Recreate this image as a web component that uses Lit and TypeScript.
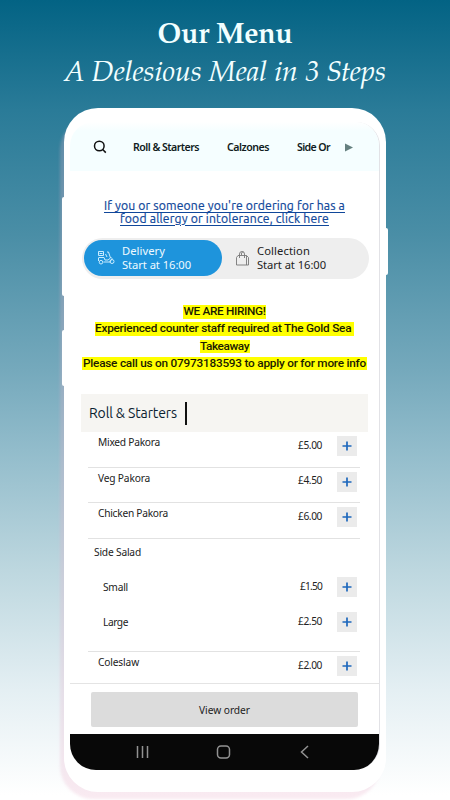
import { LitElement, html, css } from "lit";
import { customElement, property } from "lit/decorators.js";

/** Text whose tracking is adjusted so that the line takes the given width. */
@customElement("fit-text")
class FitText extends LitElement {
  @property({ type: Number }) w = 0;
  @property() text = "";
  static styles = css`
    :host { display: inline-block; white-space: nowrap; }
    .t { display: inline-block; white-space: pre; text-decoration: inherit; text-decoration-thickness: 1px; text-underline-offset: 1.5px; text-decoration-skip-ink: auto; }
  `;
  render() { return html`<span class="t">${this.text}</span>`; }
  updated() {
    const t = this.renderRoot.querySelector(".t") as HTMLElement;
    t.style.letterSpacing = "0px";
    const natural = t.getBoundingClientRect().width;
    const gap = (this.w - natural) / this.text.length;
    t.style.letterSpacing = gap.toFixed(3) + "px";
  }
}

const fit = (text: string, w: number) => html`<fit-text .text=${text} .w=${w}></fit-text>`;

@customElement("app-root")
class AppRoot extends LitElement {
  static styles = css`
    * { box-sizing: border-box; }
    :host {
      display: flex; flex-direction: column; align-items: center; position: relative;
      width: 450px; height: 800px; overflow: hidden;
      background: linear-gradient(#036384 0, #2a7b98 110px, #4a8ea6 235px, #75a9bc 370px, #92bccb 450px, #bdd7df 570px, #e4eff3 690px, #fff 795px);
      font-family: "Noto Sans", sans-serif; color: #222;
    }
    .title, .sub { font-family: "Palatino Linotype", Palatino, P052, "TeX Gyre Pagella", "URW Palladio L", "Liberation Serif", serif; color: #f2ffff; height: 38px; line-height: 38px; }
    .title { font-size: 28.5px; font-weight: 700; margin-top: 17px; }
    .sub { font-size: 28.5px; font-style: italic; padding-top: 1px; }
    .phone {
      position: relative; width: 322px; height: 684px; margin-top: 15px; padding: 14px 6px 0; background: #fff;
      border-radius: 34px; box-shadow: -5px 8px 3px -1px rgba(232, 180, 205, .28);
    }
    .bump { position: absolute; background: #fff; width: 4px; }
    .l1 { left: -2px; top: 89px; height: 99px; border-radius: 2px 0 0 2px; }
    .l2 { left: -2px; top: 222px; height: 56px; border-radius: 2px 0 0 2px; }
    .r1 { right: -2px; top: 120px; height: 47px; border-radius: 0 2px 2px 0; }
    .screen { width: 310px; height: 648px; border-radius: 24px 24px 26px 26px; overflow: hidden; border-right: 1px solid #e2e2e6; display: flex; flex-direction: column; }
    .tabs { height: 49px; flex: none; background: linear-gradient(#fff, #f5feff 9px); display: flex; align-items: center; padding: 1px 0 0 23px; font-size: 10.6px; font-weight: 600; color: #111c22; }
    .tabs svg { flex: none; }
    .tabs .a { margin-left: 26px; }
    .tabs .b { margin-left: 28px; }
    .tabs .c { margin-left: 28px; }
    .tabs .play { margin-left: 15px; }
    .link { margin-top: 29px; height: 25px; color: #10479a; font: 12.2px/12.5px Ubuntu, "Noto Sans", sans-serif; display: flex; flex-direction: column; align-items: center; text-decoration: underline; -webkit-text-stroke: .2px #10479a; }
    .link fit-text { height: 12.5px; text-decoration: underline; }
    .switch { margin: 13px 0 0 12px; width: 287px; height: 41px; flex: none; border-radius: 21px; background: #eee; display: flex; padding: 2px; }
    .opt { width: 138px; height: 36px; border-radius: 18px; display: flex; align-items: center; padding: 0 0 0 13px; font-size: 11.2px; line-height: 14px; }
    .opt.on { background: #1e94dc; color: #effaff; }
    .opt svg { margin-right: 7px; flex: none; }
    .opt fit-text { display: block; height: 14px; }
    .opt.off { padding-left: 13px; }
    .hire { margin-top: 24px; height: 70px; font: 500 11.8px/17.3px Roboto, sans-serif; color: #1b1b00; display: flex; flex-direction: column; align-items: center; }
    .hire span { background: #ff0; height: 13.5px; line-height: 13.5px; margin: 2px 0 1.8px; padding: 0 .5px; }
    .cat { margin: 21px 0 0 11px; width: 287px; height: 38px; flex: none; background: #f6f5f2; display: flex; align-items: center; padding-left: 8px; font: 14px/20px Ubuntu, "Noto Sans", sans-serif; color: #0b2230; }
    .cat i { width: 1.5px; height: 23px; background: #111; margin-left: 8px; }
    .row { flex: none; margin-left: 18px; width: 272px; display: flex; border-bottom: 1px solid #e2e2e2; font-size: 10.2px; line-height: 14px; }
    .row.none { border: 0; }
    .name { flex: 1; }
    .plus { width: 20px; height: 20px; background: #ebebeb; margin: 0 3px 0 15px; display: flex; align-items: center; justify-content: center; }
    .foot { margin-top: auto; height: 51px; border-top: 1px solid #e4e4e4; padding: 8px 0 0 21px; flex: none; background: #fff; }
    .btn { width: 267px; height: 35px; border-radius: 2px; background: #dcdcdc; display: flex; align-items: center; justify-content: center; font-size: 10.2px; color: #222; }
    .nav { height: 36px; flex: none; background: #080808; }
    .nav svg { display: block; }
    .list { flex: none; height: 251px; overflow: hidden; }
  `;

  row(name: string, w: number, price: string, pw: number, h: number, x: number, ny: number, py: number, by: number, line = true) {
    return html`<div class="row ${line ? "" : "none"}" style="height:${h}px">
      <div class="name" style="padding:${ny}px 0 0 ${x}px">${fit(name, w)}</div>
      ${price ? html`<div style="padding-top:${py}px">${fit(price, pw)}</div>
      <div class="plus" style="margin-top:${by}px"><svg width="10" height="10" viewBox="0 0 10 10"><path d="M5 .5V9.5M.5 5H9.5" stroke="#1e68bd" stroke-width="1.7"/></svg></div>` : ""}
    </div>`;
  }

  render() {
    return html`
      <div class="title">${fit("Our Menu", 135)}</div>
      <div class="sub">${fit("A Delesious Meal in 3 Steps", 322)}</div>
      <div class="phone">
        <i class="bump l1"></i><i class="bump l2"></i><i class="bump r1"></i>
        <div class="screen">
          <div class="tabs">
            <svg width="14" height="14" viewBox="0 0 14 14" fill="none" stroke="#111" stroke-width="1.5"><circle cx="6.3" cy="6" r="4.8"/><path d="M9.7 9.5L12.8 12.6"/></svg>
            <span class="a">${fit("Roll & Starters", 66)}</span>
            <span class="b">${fit("Calzones", 42)}</span>
            <span class="c">${fit("Side Or", 33)}</span>
            <svg class="play" width="8" height="9" viewBox="0 0 8 9"><path d="M0 .5L8 4.5L0 8.5Z" fill="#65807f"/></svg>
          </div>
          <div class="link">${fit("If you or someone you're ordering for has a", 241)}${fit("food allergy or intolerance, click here", 209)}</div>
          <div class="switch">
            <div class="opt on">
              <svg width="18" height="16" viewBox="0 0 18 16" fill="none" stroke="#c9ecff" stroke-width="1"><path d="M1.5 1.5H6.5V5.500H1.5ZM2.5 3.5H5.5M1.5 7.5H7L8 10H11L13.5 8L11.5 2H10M8.5 4L10 7M1.5 8V11M6.500 12H13L15 8.500L13.500 7"/><circle cx="4" cy="12.200" r="1.800"/><circle cx="15" cy="11.500" r="2"/></svg>
              <div>${fit("Delivery", 43)}${fit("Start at 16:00", 69)}</div>
            </div>
            <div class="opt off">
              <svg width="15" height="17" viewBox="0 0 15 17" fill="none" stroke="#777" stroke-width=".9"><path d="M3 5.500H11.500L13.500 7.500V15H1.500V7.500L3 5.500ZM11.500 5.500V15M4.500 8V4Q4.500 1.500 7 1.500Q9.500 1.500 9.500 4V8M6.500 5V3Q7.500 1.500 8.500 2"/></svg>
              <div>${fit("Collection", 53)}${fit("Start at 16:00", 69)}</div>
            </div>
          </div>
          <div class="hire">
            <span>${fit("WE ARE HIRING!", 82)}</span>
            <span>${fit("Experienced counter staff required at The Gold Sea ", 259)}</span>
            <span>${fit("Takeaway", 49)}</span>
            <span>${fit("Please call us on 07973183593 to apply or for more info", 283)}</span>
          </div>
          <div class="cat">${fit("Roll & Starters", 88)}<i></i></div>
          <div class="list">
            ${this.row("Mixed Pakora", 62, "£5.00", 24, 36, 10, 3, 6, 4)}
            ${this.row("Veg Pakora", 52, "£4.50", 24, 35, 10, 3, 5, 4)}
            ${this.row("Chicken Pakora", 70, "£6.00", 24, 36, 10, 3, 6, 4)}
            ${this.row("Side Salad", 47, "", 0, 35, 6, 6, 0, 0, false)}
            ${this.row("Small", 25, "£1.50", 22, 35, 15, 6, 5, 3, false)}
            ${this.row("Large", 25, "£2.50", 24, 43, 15, 6, 5, 3)}
            ${this.row("Coleslaw", 41, "£2.00", 24, 31, 10, 3, 6, 4, false)}
          </div>
          <div class="foot"><div class="btn">${fit("View order", 51)}</div></div>
          <div class="nav"><svg width="310" height="36" viewBox="0 0 310 36" fill="none" stroke="#929292" stroke-width="1.5"><path d="M67.500 12V24M72.500 12V24M77.500 12V24M238 12L231.500 18L238 24"/><rect x="147.500" y="12" width="12" height="12" rx="3.500"/></svg></div>
        </div>
      </div>`;
  }
}
